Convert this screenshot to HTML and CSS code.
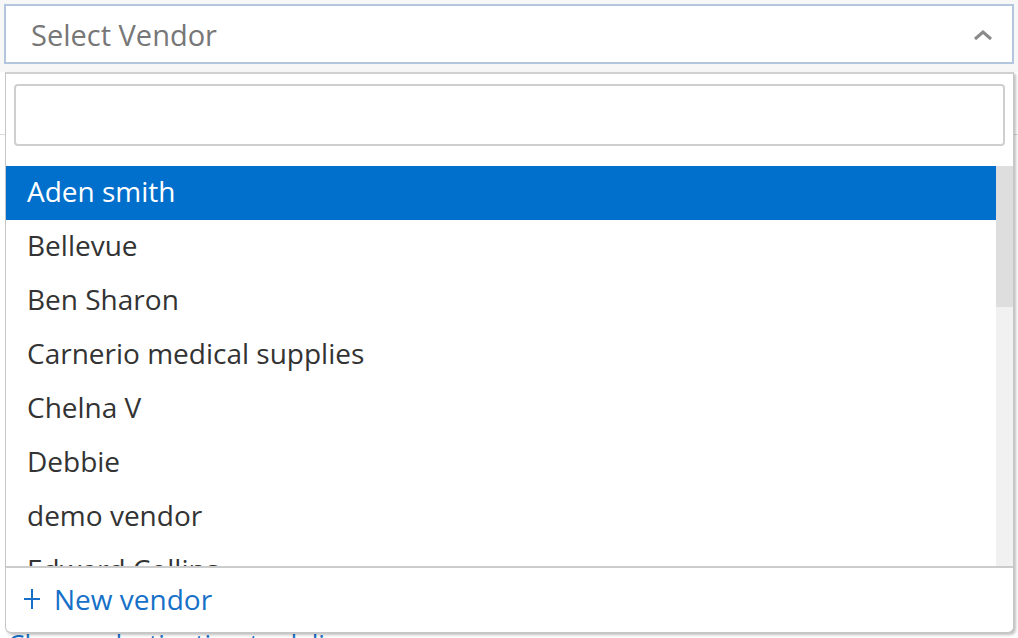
FILE: index.html
```html
<!DOCTYPE html>
<html>
<head>
<meta charset="utf-8">
<link rel="stylesheet" href="styles.css">
</head>
<body>
<div class="page">
  <div class="top">
    <div class="select">
      <span class="placeholder">Select Vendor</span>
      <svg class="chev" width="20" height="12" viewBox="0 0 20 12"><polyline points="2,10 10,3 18,10" fill="none" stroke="#8a8a8a" stroke-width="3"/></svg>
    </div>
  </div>
  <div class="under">
    <div class="rule"></div>
    <div class="spacer"></div>
    <span class="link">Change destination to deliver</span>
  </div>
  <div class="panel">
    <div class="search-wrap"><div class="search"></div></div>
    <div class="listwrap">
      <div class="list">
        <div class="item active">Aden smith</div>
        <div class="item">Bellevue</div>
        <div class="item">Ben Sharon</div>
        <div class="item">Carnerio medical supplies</div>
        <div class="item">Chelna V</div>
        <div class="item">Debbie</div>
        <div class="item">demo vendor</div>
        <div class="item">Edward Collins</div>
      </div>
      <div class="scrollbar"><div class="thumb"></div></div>
    </div>
    <div class="footer">
      <svg class="plus" width="16" height="22" viewBox="0 0 16 22"><path d="M8 1v20M0 11h16" stroke="#1670c8" stroke-width="2" fill="none"/></svg>
      <span>New vendor</span>
    </div>
  </div>
</div>
</body>
</html>
```
FILE: styles.css
```css
html, body { margin: 0; padding: 0; background: #fff; }
body { font-family: "Open Sans", Lato, sans-serif; width: 1018px; height: 638px; overflow: hidden; }
.page { position: relative; width: 1018px; height: 638px; }
.top { background: #f7f7f7; padding: 4px 4px 8px 4px; }
.select {
  height: 60px; box-sizing: border-box; width: 1010px;
  border: 2px solid #b3c6de; background: #fff;
  display: flex; align-items: center; justify-content: space-between;
  padding: 0 19px 0 25px;
}
.placeholder { color: #777; font-size: 29px; }
.chev { margin-top: 2px; }
.under { display: flex; flex-direction: column; }
.rule { height: 1px; background: #ddd; margin-top: 62px; }
.spacer { height: 490px; }
.link { color: #1670c8; font-size: 26px; padding-left: 8px; line-height: 36px; }
.panel {
  position: absolute; left: 5px; top: 72px; width: 1009px; height: 561px;
  box-sizing: border-box; background: #fff;
  border: 1px solid #c6c6c6; border-top: 2px solid #d0d0d0;
  border-radius: 0 0 6px 6px;
  box-shadow: 2px 2px 3px rgba(0,0,0,0.25);
  display: flex; flex-direction: column;
}
.search-wrap { padding: 10px 8px 20px 8px; }
.search { height: 62px; box-sizing: border-box; border: 2px solid #cfcfcf; border-radius: 4px; background: #fff; }
.listwrap { display: flex; height: 400px; overflow: hidden; }
.list { flex: 1; overflow: hidden; }
.item { height: 54px; box-sizing: border-box; line-height: 50px; padding: 0 0 4px 21px; font-size: 28px; color: #333; white-space: nowrap; }
.item.active { background: #0070cc; color: #fff; }
.scrollbar { width: 17px; background: #f1f1f1; }
.thumb { height: 141px; background: #dedede; }
.footer {
  flex: 1; border-top: 2px solid #cccccc;
  display: flex; align-items: center; padding-left: 18px; padding-bottom: 2px;
  color: #1670c8; font-size: 28px;
}
.plus { margin-right: 14px; }
```
